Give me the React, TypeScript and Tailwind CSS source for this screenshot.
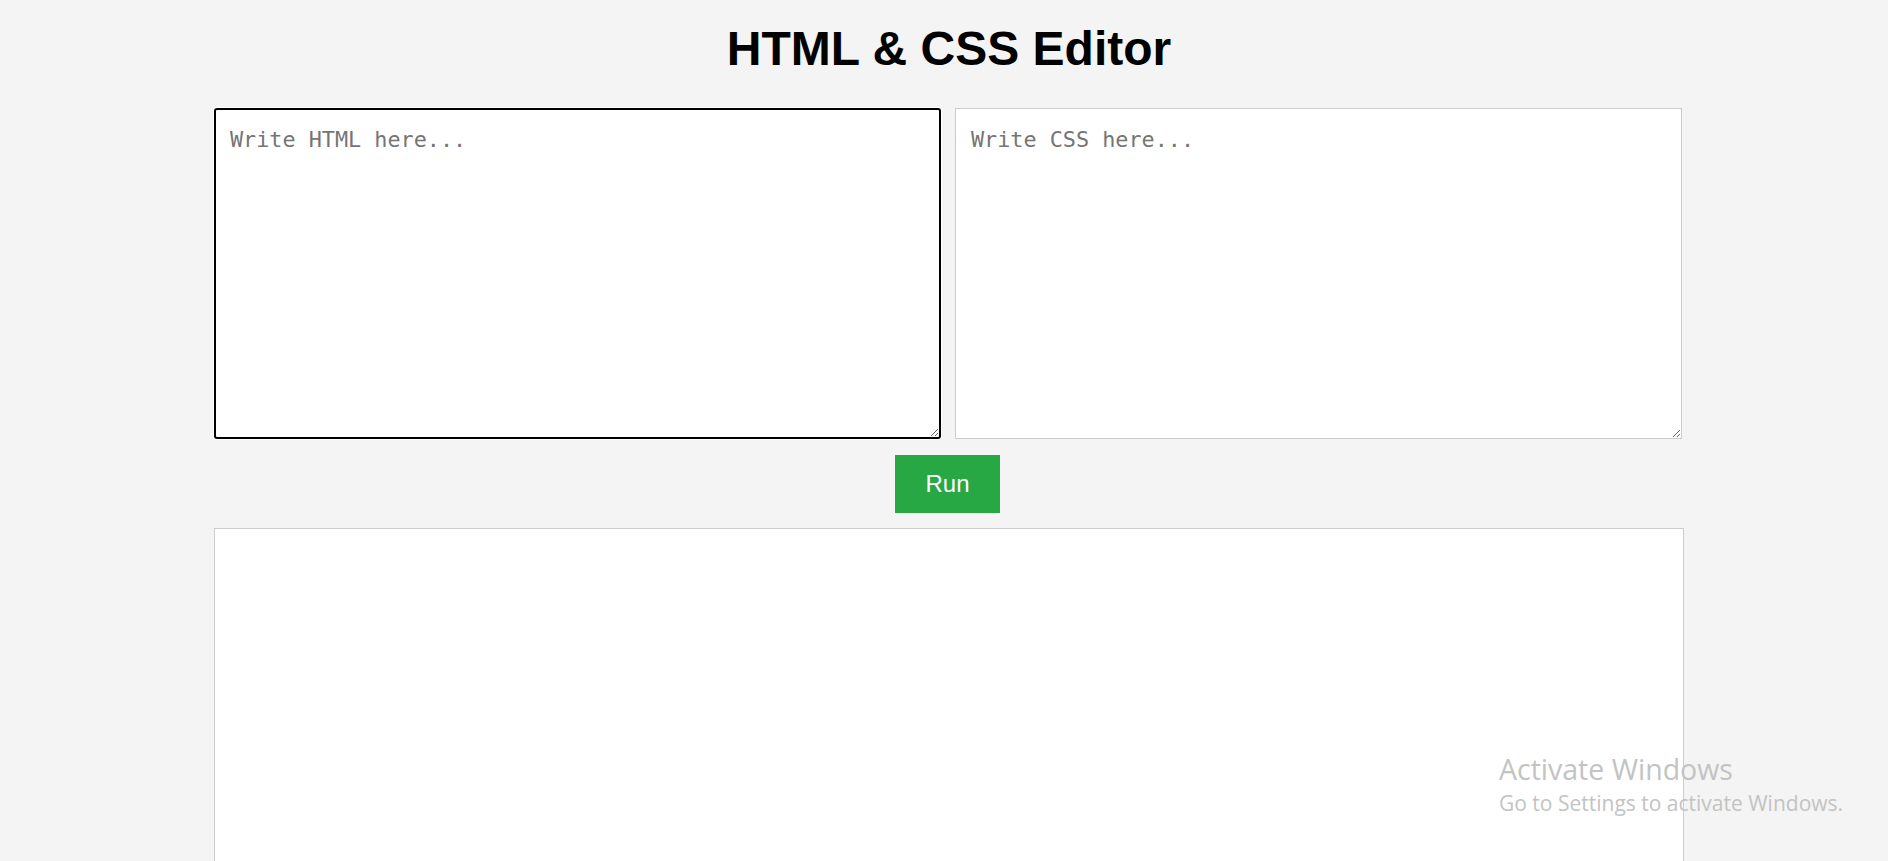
import React from 'react'

export default function App() {
  return (
    <div className="relative h-[861px] w-full overflow-hidden bg-[#f4f4f4]">
      <div className="ml-[214px] w-[1470px]">
        <h1 className="mt-[22px] text-center text-[48px] font-bold leading-[54px] text-black [font-family:'Liberation_Sans',Arial,sans-serif]">
          HTML &amp; CSS Editor
        </h1>

        <div className="mt-[32px] flex gap-[14px]">
          <textarea
            placeholder="Write HTML here..."
            className="h-[331px] w-[727px] rounded-[3px] border-2 border-black bg-white px-[14px] pt-[14px] text-[21.8px] outline-none shadow-[0_0_0_1px_#ffffff] placeholder:text-[#757575] [font-family:'DejaVu_Sans_Mono',monospace]"
          />
          <textarea
            placeholder="Write CSS here..."
            className="h-[331px] w-[727px] border border-[#cccccc] bg-white px-[15px] pt-[15px] text-[21.8px] outline-none placeholder:text-[#757575] [font-family:'DejaVu_Sans_Mono',monospace]"
          />
        </div>

        <div className="mt-[16px] flex justify-center pr-[3px]">
          <button className="h-[58px] w-[105px] bg-[#28a745] text-[24px] text-white [font-family:'Liberation_Sans',Arial,sans-serif]">
            Run
          </button>
        </div>

        <div className="mt-[15px] h-[400px] w-[1470px] border border-[#cccccc] bg-white" />
      </div>

      <div className="pointer-events-none absolute left-[1499px] top-[750px] text-[#c3c3c3] [font-family:'Open_Sans',sans-serif]">
        <div className="text-[28.5px] leading-[38px]">Activate Windows</div>
        <div className="text-[21px] leading-[30px]">Go to Settings to activate Windows.</div>
      </div>
    </div>
  )
}
